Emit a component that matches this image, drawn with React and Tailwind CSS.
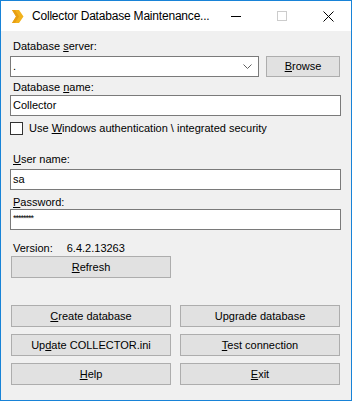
import React from 'react'

const font = { fontFamily: '"Liberation Sans", Arial, sans-serif' }

function U({ children }) {
  return <span className="underline underline-offset-[1px]">{children}</span>
}

function Btn({ children, className = '' }) {
  return (
    <div className={`flex items-center justify-center border border-[#adadad] bg-[#e1e1e1] text-[11px] text-black ${className}`}>
      <span>{children}</span>
    </div>
  )
}

function Field({ value, className = '' }) {
  return (
    <div className={`flex items-center h-[21px] w-[331px] border border-[#7a7a7a] bg-white pl-[2px] text-[11px] text-black ${className}`}>
      {value}
    </div>
  )
}

export default function App() {
  return (
    <div className="w-[352px] h-[401px] flex flex-col border border-[#1883d7] bg-white" style={font}>
      {/* title bar */}
      <div className="h-[30px] flex items-center bg-white shrink-0">
        <svg width="12" height="13" viewBox="0 0 12 13" className="ml-[11px] mt-[1px] shrink-0">
          <polygon points="0,0 7,0 11.5,6.5 7,13 0,13 4,6.5" fill="#f2b21c" />
          <polygon points="0,0 3,0 7,6.5 3,13 0,13 4,6.5" fill="#e89f12" />
        </svg>
        <span className="ml-[8px] text-[12px] text-black whitespace-nowrap tracking-[-0.2px]">
          Collector Database Maintenance...
        </span>
        <div className="ml-auto flex items-center h-full shrink-0">
          <div className="w-[46px] h-full flex items-center justify-center">
            <div className="w-[10px] h-px bg-black" />
          </div>
          <div className="w-[46px] h-full flex items-center justify-center">
            <div className="w-[10px] h-[10px] border border-[#cccccc]" />
          </div>
          <div className="w-[46px] h-full flex items-center justify-center">
            <svg width="11" height="11" viewBox="0 0 11 11">
              <path d="M0.5 0.5 L10.5 10.5 M10.5 0.5 L0.5 10.5" stroke="#000" strokeWidth="1" />
            </svg>
          </div>
        </div>
      </div>

      {/* body */}
      <div className="flex-1 bg-[#f0f0f0] flex flex-col pl-[9px] text-[11px] text-black leading-[13px]">
        <div className="mt-[9px] ml-[3px]">Database <U>s</U>erver:</div>
        <div className="mt-[3px] flex">
          <div className="flex items-center justify-between w-[249px] h-[21px] border border-[#7a7a7a] bg-white pl-[2px] pr-[6px]">
            <span>.</span>
            <svg width="9" height="6" viewBox="0 0 9 6">
              <path d="M0.5 0.5 L4.5 4.5 L8.5 0.5" stroke="#606060" fill="none" strokeWidth="1" />
            </svg>
          </div>
          <Btn className="ml-[7px] w-[74px] h-[21px]"><U>B</U>rowse</Btn>
        </div>
        <div className="mt-[4px] ml-[3px]">Database <U>n</U>ame:</div>
        <Field value="Collector" className="mt-[1px]" />
        <div className="mt-[6px] flex items-center">
          <div className="w-[13px] h-[13px] border border-[#333333] bg-white" />
          <span className="ml-[6px]">Use <U>W</U>indows authentication \ integrated security</span>
        </div>
        <div className="mt-[18px] ml-[3px]"><U>U</U>ser name:</div>
        <Field value="sa" className="mt-[3px]" />
        <div className="mt-[6px] ml-[3px]"><U>P</U>assword:</div>
        <Field value={<span className="text-[9px] tracking-[-1px] leading-[9px] pb-[3px]">********</span>} className="mt-[0px]" />
        <div className="mt-[12px] ml-[3px] flex">
          <span>Version:</span>
          <span className="ml-[14px]">6.4.2.13263</span>
        </div>
        <Btn className="mt-[1px] ml-[1px] w-[160px] h-[22px]"><U>R</U>efresh</Btn>

        <div className="mt-[27px] ml-[1px] grid grid-cols-[160px_160px] gap-x-[9px] gap-y-[7px]">
          <Btn className="h-[22px]"><U>C</U>reate database</Btn>
          <Btn className="h-[22px]">Up<U>g</U>rade database</Btn>
          <Btn className="h-[22px]">Up<U>d</U>ate COLLECTOR.ini</Btn>
          <Btn className="h-[22px]"><U>T</U>est connection</Btn>
          <Btn className="h-[22px]"><U>H</U>elp</Btn>
          <Btn className="h-[22px]"><U>E</U>xit</Btn>
        </div>
      </div>
    </div>
  )
}
